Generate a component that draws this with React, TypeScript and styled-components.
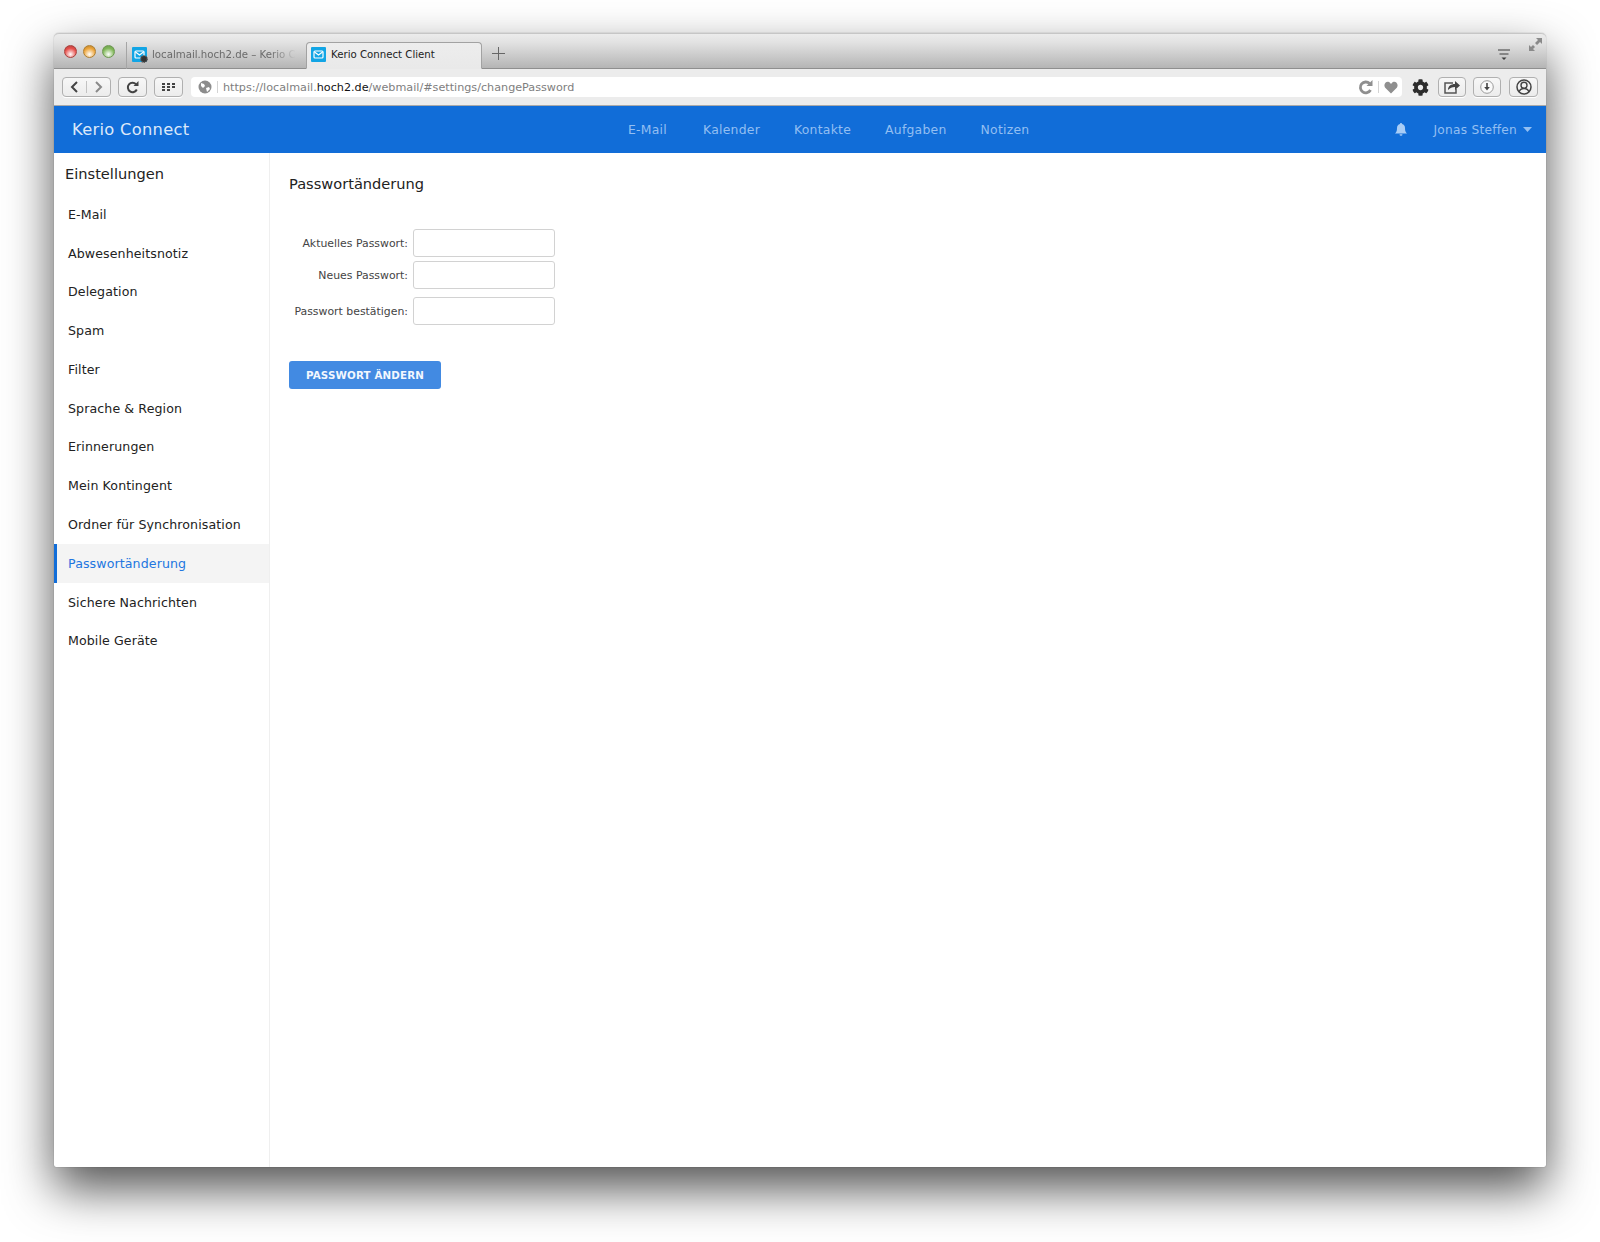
import styled, { createGlobalStyle } from "styled-components";
import { FaCog } from "react-icons/fa";

const GlobalStyle = createGlobalStyle`
  html, body {
    margin: 0;
    padding: 0;
    background: #fff;
  }
  * {
    box-sizing: border-box;
  }
`;

const Page = styled.div`
  height: 1242px;
  padding: 33px 54px 75px;
  overflow: hidden;
  font-family: "DejaVu Sans", "Liberation Sans", sans-serif;
`;

const Window = styled.div`
  position: relative;
  height: 1134px;
  display: flex;
  flex-direction: column;
  background: #fff;
  border-radius: 5px 5px 2px 2px;
  box-shadow: 0 22px 48px rgba(0, 0, 0, 0.68), 0 0 1px rgba(0, 0, 0, 0.5);
`;

const TitleBar = styled.div`
  height: 36px;
  flex: none;
  display: flex;
  align-items: flex-end;
  padding-left: 10px;
  border-radius: 5px 5px 0 0;
  border-top: 1px solid #c6c6c6;
  border-bottom: 1px solid #8f8f8f;
  background: linear-gradient(#ececec, #e2e2e2 25%, #b5b5b5);
`;

const Lights = styled.div`
  display: flex;
  gap: 6px;
  align-self: flex-start;
  margin-top: 11px;
  width: 62px;
`;

const Light = styled.span<{ $c: string; $d: string }>`
  width: 13px;
  height: 13px;
  border-radius: 50%;
  border: 1px solid ${(p) => p.$d};
  background: radial-gradient(circle at 50% 75%, #fff 0, ${(p) => p.$c} 60%, ${(p) => p.$d} 100%);
`;

const Tab = styled.div<{ $active?: boolean }>`
  height: 27px;
  display: flex;
  align-items: center;
  overflow: hidden;
  white-space: nowrap;
  padding-bottom: 2px;
  font-size: 10.2px;
  width: ${(p) => (p.$active ? "176px" : "180px")};
  padding-left: ${(p) => (p.$active ? "4px" : "5px")};
  gap: ${(p) => (p.$active ? "4px" : "4px")};
  color: ${(p) => (p.$active ? "#222" : "#6a6a6a")};
  margin-bottom: -1px;
  ${(p) =>
    p.$active
      ? `background: linear-gradient(#ededed, #e9e9e9);
         border: 1px solid #a2a2a2;
         border-bottom: 1px solid #e9e9e9;
         border-radius: 4px 4px 0 0;`
      : `border-left: 1px solid #a5a5a5;`}
`;

const TabLabel = styled.span`
  -webkit-mask-image: linear-gradient(90deg, #000 82%, transparent);
  mask-image: linear-gradient(90deg, #000 82%, transparent);
`;

const PlusBox = styled.div`
  display: flex;
  align-self: flex-start;
  margin: 13px 0 0 10px;
`;

const TitleRight = styled.div`
  margin-left: auto;
  display: flex;
  align-self: flex-start;
  margin-top: 14px;
  margin-right: 35px;
`;

const FullScreen = styled.div`
  position: absolute;
  top: 4px;
  right: 3px;
  display: flex;
`;

const Toolbar = styled.div`
  height: 37px;
  flex: none;
  display: flex;
  align-items: center;
  padding: 0 8px;
  background: #ececec;
  border-bottom: 1px solid #a9a9a9;
`;

const ToolButton = styled.div<{ $w: number; $ml?: number }>`
  width: ${(p) => p.$w}px;
  height: 20px;
  margin-left: ${(p) => p.$ml ?? 7}px;
  flex: none;
  display: flex;
  align-items: center;
  justify-content: center;
  border: 1px solid #b0b0b0;
  border-radius: 4px;
  background: linear-gradient(#f7f7f7, #ececec);
  box-shadow: 0 1px 0 #fff;
`;

const NavHalf = styled.div<{ $divider?: boolean }>`
  flex: 1;
  height: 12px;
  display: flex;
  align-items: center;
  justify-content: center;
  border-left: ${(p) => (p.$divider ? "1px solid #c2c2c2" : "none")};
`;

const UrlBar = styled.div`
  flex: 1;
  height: 20px;
  margin-left: 8px;
  display: flex;
  align-items: center;
  padding: 0 4px 0 7px;
  background: #fff;
  border-radius: 4px;
  font-size: 11.2px;
  color: #7e7e7e;
  white-space: nowrap;
`;

const UrlDivider = styled.span`
  width: 1px;
  height: 12px;
  margin: 0 5px;
  background: #d4d4d4;
`;

const UrlHost = styled.b`
  font-weight: 400;
  color: #111;
`;

const UrlEnd = styled.div`
  margin-left: auto;
  display: flex;
  align-items: center;
`;

const GearBox = styled.div`
  width: 36px;
  display: flex;
  justify-content: center;
  margin-right: -7px;
  color: #2c2c2c;
  font-size: 17px;
`;

const TopNav = styled.div`
  height: 47px;
  flex: none;
  display: flex;
  align-items: center;
  padding: 0 14px 0 18px;
  background: #116dd8;
`;

const Brand = styled.div`
  width: 556px;
  font-size: 16.3px;
  letter-spacing: 0.3px;
  color: #dbe8fa;
`;

const NavLinks = styled.nav`
  display: flex;
  gap: 34px;
`;

const NavLink = styled.a`
  font-size: 12.4px;
  letter-spacing: 0.25px;
  color: #93bff2;
  &:first-child {
    margin-right: 2px;
  }
`;

const UserArea = styled.div`
  margin-left: auto;
  display: flex;
  align-items: center;
  font-size: 12.2px;
  letter-spacing: 0.25px;
  color: #93bff2;
`;

const UserName = styled.span`
  margin: 0 6px 0 26px;
`;

const Body = styled.div`
  flex: 1;
  display: flex;
  min-height: 0;
`;

const Sidebar = styled.aside`
  width: 216px;
  flex: none;
  border-right: 1px solid #efefef;
`;

const SidebarTitle = styled.h2`
  margin: 0;
  height: 42px;
  padding: 12px 0 0 11px;
  font-size: 14.6px;
  line-height: 18px;
  font-weight: 400;
  color: #222;
`;

const SideItem = styled.div<{ $active?: boolean }>`
  height: 38.78px;
  display: flex;
  align-items: center;
  padding-left: ${(p) => (p.$active ? "11px" : "14px")};
  font-size: 12.6px;
  letter-spacing: 0.1px;
  color: ${(p) => (p.$active ? "#2276e0" : "#222")};
  background: ${(p) => (p.$active ? "#f4f4f4" : "transparent")};
  border-left: ${(p) => (p.$active ? "3px solid #116dd8" : "none")};
`;

const Content = styled.main`
  flex: 1;
  padding: 22px 0 0 19px;
`;

const Heading = styled.h1`
  margin: 0 0 36px;
  font-size: 14.6px;
  line-height: 18px;
  font-weight: 400;
  color: #222;
`;

const FormRow = styled.div<{ $mb: number }>`
  display: flex;
  align-items: center;
  margin-bottom: ${(p) => p.$mb}px;
`;

const FieldLabel = styled.label`
  width: 119px;
  margin-right: 5px;
  text-align: right;
  font-size: 10.9px;
  color: #444;
`;

const Input = styled.input`
  width: 142px;
  height: 28px;
  border: 1px solid #d2d2d2;
  border-radius: 3px;
  background: #fff;
  outline: none;
`;

const Submit = styled.button`
  width: 152px;
  height: 28px;
  margin-top: 36px;
  border: none;
  border-radius: 3px;
  background: #428ae2;
  color: #f2f7fe;
  font-family: inherit;
  font-size: 10.3px;
  font-weight: 700;
  letter-spacing: 0.15px;
`;

function Favicon({ badge }: { badge?: boolean }) {
  return (
    <svg width="16" height="16" viewBox="0 0 16 16" style={{ flex: "none" }}>
      <rect width="15" height="15" rx="1" fill="#12a5e5" />
      <rect x="3" y="4" width="9" height="7" rx="1" fill="none" stroke="#fff" strokeWidth="1.2" />
      <path d="M3.5 5l4 3 4-3" fill="none" stroke="#fff" strokeWidth="1.2" />
      {badge && <circle cx="12" cy="12" r="3.2" fill="#333" stroke="#555" strokeDasharray="1.2 .8" strokeWidth="1.4" />}
    </svg>
  );
}

const sideItems = [
  "E-Mail",
  "Abwesenheitsnotiz",
  "Delegation",
  "Spam",
  "Filter",
  "Sprache & Region",
  "Erinnerungen",
  "Mein Kontingent",
  "Ordner für Synchronisation",
  "Passwortänderung",
  "Sichere Nachrichten",
  "Mobile Geräte",
];

const navItems = ["E-Mail", "Kalender", "Kontakte", "Aufgaben", "Notizen"];

export default function App() {
  return (
    <>
      <GlobalStyle />
      <Page>
        <Window>
          <TitleBar>
            <Lights>
              <Light $c="#e8504c" $d="#a8403c" />
              <Light $c="#eda53a" $d="#b07f30" />
              <Light $c="#80b858" $d="#6c9850" />
            </Lights>
            <Tab>
              <Favicon badge />
              <TabLabel>localmail.hoch2.de – Kerio C</TabLabel>
            </Tab>
            <Tab $active>
              <Favicon />
              <span>Kerio Connect Client</span>
            </Tab>
            <PlusBox>
              <svg width="13" height="13" viewBox="0 0 13 13">
                <path d="M6.5 0v13M0 6.5h13" stroke="#666" strokeWidth="1" />
              </svg>
            </PlusBox>
            <TitleRight>
              <svg width="14" height="14" viewBox="0 0 14 14">
                <path d="M1 2h12M2.5 6h9" stroke="#3c3c3c" strokeWidth="1" />
                <path d="M4.5 9.5h5L7 12z" fill="#3c3c3c" />
              </svg>
            </TitleRight>
            <FullScreen>
              <svg width="15" height="15" viewBox="0 0 15 15">
                <path d="M8 1h6v6l-2-2-3 3-2-2 3-3z" fill="#8a8a8a" />
                <path d="M1 8v6h6l-2-2 2-2-2-2-2 2z" fill="#8a8a8a" />
              </svg>
            </FullScreen>
          </TitleBar>
          <Toolbar>
            <ToolButton $w={49} $ml={0}>
              <NavHalf>
                <svg width="9" height="12" viewBox="0 0 9 12">
                  <path d="M7 1L2 6l5 5" fill="none" stroke="#444" strokeWidth="2" />
                </svg>
              </NavHalf>
              <NavHalf $divider>
                <svg width="9" height="12" viewBox="0 0 9 12">
                  <path d="M2 1l5 5-5 5" fill="none" stroke="#8a8a8a" strokeWidth="2" />
                </svg>
              </NavHalf>
            </ToolButton>
            <ToolButton $w={29}>
              <svg width="13" height="13" viewBox="0 0 13 13">
                <path d="M10.8 8.5A4.7 4.7 0 1 1 10 3.2" fill="none" stroke="#444" strokeWidth="2" />
                <path d="M7.5 5h5V0z" fill="#444" />
              </svg>
            </ToolButton>
            <ToolButton $w={29}>
              <svg width="13" height="10" viewBox="0 0 13 10">
                <path
                  d="M0 1h3v2H0zM5 1h3v2H5zM10 1h3v2h-3zM0 4h3v2H0zM5 4h3v2H5zM10 4h3v2h-3zM0 7h3v2H0zM5 7h3v2H5z"
                  fill="#444"
                />
              </svg>
            </ToolButton>
            <UrlBar>
              <svg width="14" height="14" viewBox="0 0 14 14" style={{ flex: "none" }}>
                <circle cx="7" cy="7" r="6.5" fill="#8c8c8c" />
                <path d="M3 3l3 1 1 2-2 2-2-2zM8 8l3-1 1 2-3 3z" fill="#fff" />
              </svg>
              <UrlDivider />
              <span>
                https://localmail.<UrlHost>hoch2.de</UrlHost>/webmail/#settings/changePassword
              </span>
              <UrlEnd>
                <svg width="15" height="15" viewBox="0 0 15 15">
                  <path d="M12.5 10A5.4 5.4 0 1 1 11.6 3.6" fill="none" stroke="#8f8f8f" strokeWidth="2.8" />
                  <path d="M8.5 6h6V0z" fill="#8f8f8f" />
                </svg>
                <UrlDivider />
                <svg width="14" height="13" viewBox="0 0 14 13">
                  <path d="M7 12.5L1 6.500C-1 3 2.500-.5 5 1c1 .5 2 2 2 2s1-1.500 2-2c2.500-1.500 6 2 4 5.500z" fill="#8f8f8f" />
                </svg>
              </UrlEnd>
            </UrlBar>
            <GearBox>
              <FaCog />
            </GearBox>
            <ToolButton $w={28} $ml={7}>
              <svg width="18" height="14" viewBox="0 0 18 14">
                <path d="M10 3H2v10h11V9" fill="none" stroke="#555" strokeWidth="1.5" />
                <path d="M5 10c0-4 3-6 7-6V1l5 4.500L12 10V7c-3 0-5 1-7 3z" fill="#444" />
              </svg>
            </ToolButton>
            <ToolButton $w={28}>
              <svg width="14" height="14" viewBox="0 0 14 14">
                <circle cx="7" cy="7" r="6.3" fill="#fafafa" stroke="#9a9a9a" />
                <path d="M7 3v5" stroke="#444" strokeWidth="1.600" />
                <path d="M4.200 7h5.600L7 10.500z" fill="#444" />
              </svg>
            </ToolButton>
            <ToolButton $w={29} $ml={8}>
              <svg width="16" height="16" viewBox="0 0 16 16">
                <circle cx="8" cy="8" r="7" fill="#f3f3f3" stroke="#444" strokeWidth="1.500" />
                <circle cx="8" cy="6.300" r="3" fill="none" stroke="#444" strokeWidth="1.400" />
                <path d="M3 13c1-3 3-3.500 5-3.500s4 .5 5 3.500" fill="none" stroke="#444" strokeWidth="1.400" />
              </svg>
            </ToolButton>
          </Toolbar>
          <TopNav>
            <Brand>Kerio Connect</Brand>
            <NavLinks>
              {navItems.map((item) => (
                <NavLink key={item}>{item}</NavLink>
              ))}
            </NavLinks>
            <UserArea>
              <svg width="12" height="13" viewBox="0 0 12 13">
                <path d="M6 0c.8 0 1 .6 1 1 2 .5 3 2 3 4 0 3 .5 4 2 5.500H0C1.500 9 2 8 2 5c0-2 1-3.500 3-4 0-.4.200-1 1-1z" fill="#a9cdf6" />
                <path d="M4.500 11.300h3a1.500 1.500 0 0 1-3 0z" fill="#a9cdf6" />
              </svg>
              <UserName>Jonas Steffen</UserName>
              <svg width="9" height="5" viewBox="0 0 9 5">
                <path d="M0 0h9L4.500 5z" fill="#93bff2" />
              </svg>
            </UserArea>
          </TopNav>
          <Body>
            <Sidebar>
              <SidebarTitle>Einstellungen</SidebarTitle>
              {sideItems.map((item) => (
                <SideItem key={item} $active={item === "Passwortänderung"}>
                  {item}
                </SideItem>
              ))}
            </Sidebar>
            <Content>
              <Heading>Passwortänderung</Heading>
              <FormRow $mb={4}>
                <FieldLabel>Aktuelles Passwort:</FieldLabel>
                <Input type="password" />
              </FormRow>
              <FormRow $mb={8}>
                <FieldLabel>Neues Passwort:</FieldLabel>
                <Input type="password" />
              </FormRow>
              <FormRow $mb={0}>
                <FieldLabel>Passwort bestätigen:</FieldLabel>
                <Input type="password" />
              </FormRow>
              <Submit>PASSWORT ÄNDERN</Submit>
            </Content>
          </Body>
        </Window>
      </Page>
    </>
  );
}
